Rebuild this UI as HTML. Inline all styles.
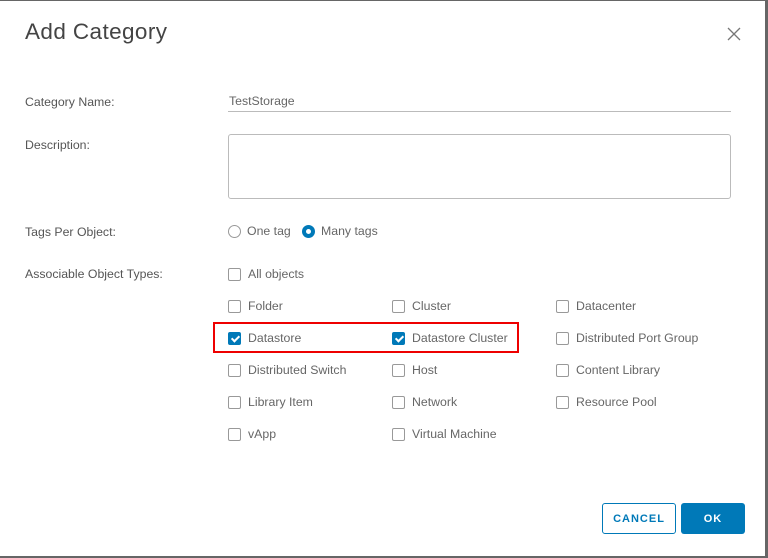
<!DOCTYPE html><html><head><style>
body{margin:0;width:768px;height:558px;background:#666;font-family:"Liberation Sans",sans-serif;overflow:hidden;position:relative}
.d{position:absolute;left:0px;top:1px;width:765px;height:555px;background:#fff}
.t{position:absolute;left:25px;top:19px;font-size:22.5px;color:#444;letter-spacing:.4px}
.x{position:absolute;left:727px;top:27px}
.l{position:absolute;left:25px;font-size:12.3px;color:#555}
.in{position:absolute;left:228px;top:91px;width:503px;height:20px;border-bottom:1px solid #bbb;font-size:12.3px;color:#666;}
.ta{position:absolute;left:228px;top:134px;width:501px;height:63px;border:1px solid #bbb;border-radius:3px}
.c{position:absolute;font-size:12.3px;color:#666;display:flex;align-items:center}
.b{width:13px;height:13px;border:1px solid #999;border-radius:2px;margin-right:7px;box-sizing:border-box;display:inline-block;position:relative}
.on{background:#0079b8;border-color:#0079b8}
.on:after{content:"";position:absolute;left:3.5px;top:1.5px;width:3px;height:6px;border:solid #fff;border-width:0 2px 2px 0;transform:rotate(45deg)}
.r{width:13px;height:13px;border:1px solid #999;border-radius:50%;margin-right:6px;box-sizing:border-box;display:inline-block}
.rs{border:4px solid #0079b8;background:#fff}
.red{position:absolute;left:213px;top:322px;width:306px;height:31px;border:2px solid #e00;box-sizing:border-box}
.btn{position:absolute;top:503px;height:31px;font-size:11px;font-weight:bold;letter-spacing:1px;display:flex;align-items:center;justify-content:center;border-radius:3px;box-sizing:border-box}
</style></head><body><div class="d"></div>
<div class="t">Add Category</div>
<svg class="x" width="14" height="14"><path d="M1 1L13 13M13 1L1 13" stroke="#777" stroke-width="1.3"/></svg>
<div class="l" style="top:95px">Category Name:</div>
<div class="in"><span style="position:absolute;left:1px;top:3px">TestStorage</span></div>
<div class="l" style="top:138px">Description:</div>
<div class="ta"></div>
<div class="l" style="top:225px">Tags Per Object:</div>
<div class="c" style="left:228px;top:224px"><span class="r"></span>One tag</div>
<div class="c" style="left:302px;top:224px"><span class="r rs"></span>Many tags</div>
<div class="l" style="top:267px">Associable Object Types:</div>
<div class="c" style="left:228px;top:267px"><span class="b"></span>All objects</div>
<div class="c" style="left:228px;top:299px"><span class="b"></span>Folder</div>
<div class="c" style="left:392px;top:299px"><span class="b"></span>Cluster</div>
<div class="c" style="left:556px;top:299px"><span class="b"></span>Datacenter</div>
<div class="c" style="left:228px;top:331px"><span class="b on"></span>Datastore</div>
<div class="c" style="left:392px;top:331px"><span class="b on"></span>Datastore Cluster</div>
<div class="c" style="left:556px;top:331px"><span class="b"></span>Distributed Port Group</div>
<div class="c" style="left:228px;top:363px"><span class="b"></span>Distributed Switch</div>
<div class="c" style="left:392px;top:363px"><span class="b"></span>Host</div>
<div class="c" style="left:556px;top:363px"><span class="b"></span>Content Library</div>
<div class="c" style="left:228px;top:395px"><span class="b"></span>Library Item</div>
<div class="c" style="left:392px;top:395px"><span class="b"></span>Network</div>
<div class="c" style="left:556px;top:395px"><span class="b"></span>Resource Pool</div>
<div class="c" style="left:228px;top:427px"><span class="b"></span>vApp</div>
<div class="c" style="left:392px;top:427px"><span class="b"></span>Virtual Machine</div>
<div class="red"></div>
<div class="btn" style="left:602px;width:74px;border:1px solid #0079b8;color:#0079b8;background:#fff">CANCEL</div>
<div class="btn" style="left:681px;width:64px;background:#0079b8;color:#fff">OK</div>
</body></html>
